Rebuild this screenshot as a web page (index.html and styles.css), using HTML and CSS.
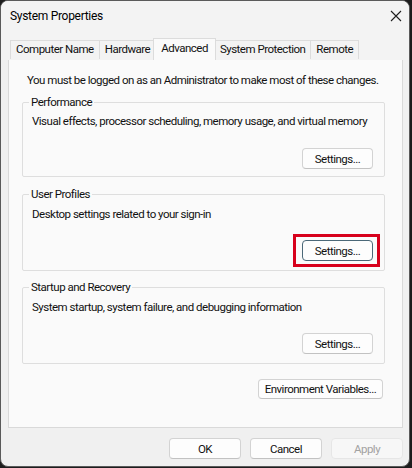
FILE: index.html
```html
<!DOCTYPE html>
<html>
<head>
<meta charset="utf-8">
<link rel="stylesheet" href="styles.css">
</head>
<body>
<div class="window">
  <div class="titlebar">
    <span class="title">System Properties</span>
    <svg class="close" width="12" height="12" viewBox="0 0 12 12"><path d="M1 1 L11 11 M11 1 L1 11" stroke="#1f1f1f" stroke-width="1.1" fill="none"/></svg>
  </div>
  <div class="tabs">
    <div class="tab">Computer Name</div>
    <div class="tab">Hardware</div>
    <div class="tab tab-active">Advanced</div>
    <div class="tab">System Protection</div>
    <div class="tab">Remote</div>
  </div>
  <div class="panel">
    <p class="intro">You must be logged on as an Administrator to make most of these changes.</p>
    <fieldset class="group">
      <legend>Performance</legend>
      <p class="desc">Visual effects, processor scheduling, memory usage, and virtual memory</p>
      <div class="actions"><button class="btn">Settings...</button></div>
    </fieldset>
    <fieldset class="group group-next">
      <legend>User Profiles</legend>
      <p class="desc">Desktop settings related to your sign-in</p>
      <div class="actions"><span class="highlight"><button class="btn btn-focus">Settings...</button></span></div>
    </fieldset>
    <fieldset class="group group-next group-last">
      <legend>Startup and Recovery</legend>
      <p class="desc">System startup, system failure, and debugging information</p>
      <div class="actions"><button class="btn">Settings...</button></div>
    </fieldset>
    <div class="env-row"><button class="btn btn-env">Environment Variables...</button></div>
  </div>
  <div class="footer">
    <button class="btn btn-foot">OK</button>
    <button class="btn btn-foot">Cancel</button>
    <button class="btn btn-foot btn-disabled">Apply</button>
  </div>
</div>
</body>
</html>
```
FILE: styles.css
```css
html, body {
  margin: 0;
  padding: 0;
  background: #1d1d1d;
}
body {
  width: 412px;
  height: 468px;
  font-family: Roboto, "Liberation Sans", sans-serif;
  font-size: 11.5px;
  letter-spacing: -0.5px;
  color: #111;
  white-space: nowrap;
}
.window {
  box-sizing: border-box;
  width: 410px;
  height: 467px;
  border: 1px solid #5a5a5a;
  border-radius: 8px;
  background: #f0f0f0;
  display: flex;
  flex-direction: column;
  overflow: hidden;
}
.titlebar {
  height: 37px;
  display: flex;
  align-items: flex-start;
  justify-content: space-between;
  background: #f3f3f3;
}
.title {
  margin: 7px 0 0 9px;
  line-height: 16px;
  font-size: 12px;
  letter-spacing: -0.3px;
  color: #000;
}
.close {
  margin: 9px 7px 0 0;
}
.tabs {
  display: flex;
  align-items: flex-end;
  height: 22px;
  padding-left: 9px;
  background: #f3f3f3;
  position: relative;
  z-index: 1;
}
.tab {
  box-sizing: border-box;
  height: 19px;
  padding: 0 5px;
  line-height: 17px;
  border: 1px solid #dcdcdc;
  border-bottom: none;
  background: #f3f3f3;
  margin-right: -1px;
  margin-bottom: 1px;
}
.tab-active {
  height: 22px;
  margin: 0 -2px 0 -2px;
  padding: 0 7px;
  line-height: 18px;
  background: #fafafa;
  position: relative;
  z-index: 2;
}
.panel {
  box-sizing: border-box;
  height: 369px;
  margin: -1px 6px 0 7px;
  border: 1px solid #d9d9d9;
  background: #fafafa;
  padding: 12px 17px 0 13px;
}
.intro {
  margin: 0;
  padding-left: 5px;
  line-height: 16px;
}
.group {
  min-width: 0;
  margin: 6px 0 0 0;
  padding: 3px 11px 7px 9px;
  border: 1px solid #dedede;
  border-radius: 2px;
}
.group-next {
  margin-top: 9px;
  padding-top: 4px;
  padding-bottom: 9px;
}
.group-last {
  margin-top: 8px;
}
.group legend {
  margin-left: -3px;
  padding: 0 2px;
  line-height: 16px;
}
.desc {
  margin: 0;
  line-height: 16px;
}
.actions {
  display: flex;
  justify-content: flex-end;
  margin-top: 19px;
}
.group-next .actions {
  margin-top: 18px;
}
.btn {
  box-sizing: border-box;
  height: 21px;
  width: 71px;
  padding: 0;
  font: inherit;
  letter-spacing: inherit;
  color: #111;
  background: #fdfdfd;
  border: 1px solid #d3d3d3;
  border-bottom-color: #c2c2c2;
  border-radius: 4px;
}
.btn-focus {
  border: 1px solid #4b6878;
}
.highlight {
  position: relative;
  display: flex;
}
.highlight::after {
  content: "";
  position: absolute;
  top: -6px;
  bottom: -6px;
  left: -9px;
  right: -7px;
  border: 3px solid #d7001c;
}
.env-row {
  display: flex;
  justify-content: flex-end;
  margin: 15px 2px 0 0;
}
.btn-env {
  width: 125px;
  height: 20px;
}
.footer {
  display: flex;
  justify-content: flex-end;
  gap: 9px;
  padding: 10px 6px 0 0;
}
.btn-foot {
  width: 72px;
}
.btn-disabled {
  color: #a2a2a2;
  border-color: #e6e6e6;
  background: #f7f7f7;
}
```
